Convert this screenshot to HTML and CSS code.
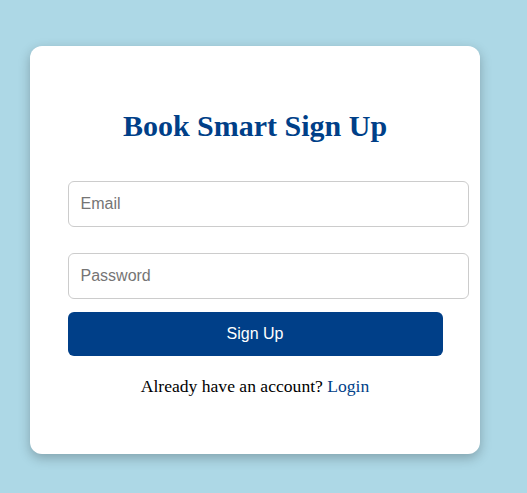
FILE: index.html
```html
<!DOCTYPE html>
<html lang="en">
<head>
  <meta charset="UTF-8">
  <meta name="viewport" content="width=device-width, initial-scale=1.0">
  <title>Book Smart Sign Up</title>
  <link rel="stylesheet" href="styles.css">
</head>
<body>
  <div class="signup-card">
    <h2>Book Smart Sign Up</h2>
    <form id="signupForm">
      <input type="email" id="email" placeholder="Email" required>
      <input type="password" id="password" placeholder="Password" required>
      <button type="submit">Sign Up</button>
    </form>
    <p class="switch">Already have an account? <a href="#">Login</a></p>
  </div>
</body>
</html>
```

FILE: styles.css
```css
body {
  font-family: 'Liberation Serif', 'Times New Roman', serif;
  background-color: #add8e6;
  margin: 0;
  padding: 46px 0 30px 30px;
}

.signup-card {
  width: 375px;
  padding: 37.5px;
  background-color: white;
  border-radius: 12px;
  box-shadow: 0 4px 12px rgba(0, 0, 0, 0.25);
  text-align: center;
}

h2 {
  font-size: 30px;
  color: #003f88;
  margin: 25px 0;
}

form {
  display: flex;
  flex-direction: column;
}

input {
  width: 100%;
  margin: 13px 0;
  padding: 13px 12px;
  border: 1px solid #ccc;
  border-radius: 6px;
  font-family: 'Liberation Sans', Arial, sans-serif;
  font-size: 16px;
  box-sizing: content-box;
}

input::placeholder {
  color: #757575;
}

button {
  background-color: #003f88;
  color: white;
  padding: 13px;
  font-family: 'Liberation Sans', Arial, sans-serif;
  font-size: 16px;
  border: none;
  border-radius: 6px;
  cursor: pointer;
}

.switch {
  margin: 20px 0;
  font-size: 17.6px;
  color: #000;
}

.switch a {
  color: #003f88;
  text-decoration: none;
}
```
